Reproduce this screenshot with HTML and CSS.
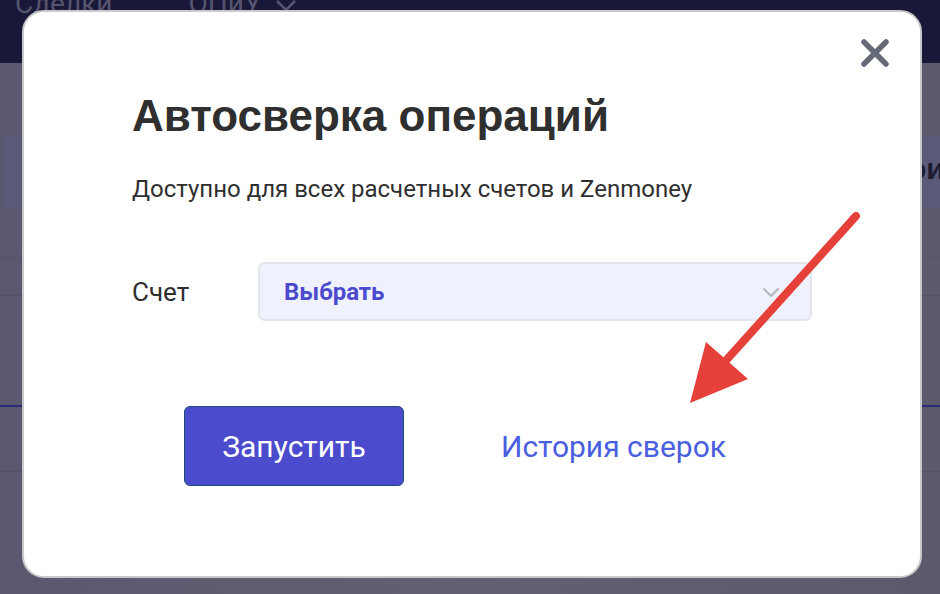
FILE: index.html
```html
<!DOCTYPE html>
<html lang="ru">
<head>
<meta charset="utf-8">
<title>Автосверка операций</title>
<link rel="stylesheet" href="styles.css">
</head>
<body>
<div class="page">
  <header class="topbar">
    <span class="nav-item nav-deals">Сделки</span>
    <span class="nav-item nav-pl">ОПиУ
      <svg class="nav-chevron" width="22" height="14" viewBox="0 0 22 14"><path d="M2 2 L11 11 L20 2" fill="none" stroke="currentColor" stroke-width="2.5"/></svg>
    </span>
  </header>
  <main class="backdrop">
    <div class="bg-card bg-card-left"></div>
    <div class="bg-card bg-card-right"><span class="bg-text">ои</span></div>
    <div class="bg-line l1"></div>
    <div class="bg-line l2"></div>
    <div class="bg-line l3 blue"></div>
    <div class="bg-line l4"></div>
  </main>

  <div class="modal">
    <button class="close" aria-label="Закрыть">
      <svg width="30" height="30" viewBox="0 0 30 30"><path d="M4 4 L26 26 M26 4 L4 26" stroke="#646a77" stroke-width="5.5" stroke-linecap="round"/></svg>
    </button>
    <h1 class="title">Автосверка операций</h1>
    <p class="subtitle">Доступно для всех расчетных счетов и Zenmoney</p>
    <div class="field">
      <span class="label">Счет</span>
      <div class="select">
        <span class="select-value">Выбрать</span>
        <svg class="select-chevron" width="18" height="12" viewBox="0 0 18 12"><path d="M1.5 1.5 L9 9 L16.5 1.5" fill="none" stroke="#b3b6bd" stroke-width="2"/></svg>
      </div>
    </div>
    <div class="actions">
      <button class="run">Запустить</button>
      <a class="history" href="#">История сверок</a>
    </div>
  </div>

  <svg class="annotation" width="940" height="594" viewBox="0 0 940 594">
    <line x1="856" y1="216" x2="712" y2="376" stroke="#e5403a" stroke-width="8" stroke-linecap="round"/>
    <polygon points="690,403 706,342 748,379" fill="#e5403a"/>
  </svg>
</div>
</body>
</html>
```
FILE: styles.css
```css
* { box-sizing: border-box; }
html, body { margin: 0; padding: 0; }
body {
  width: 940px;
  height: 594px;
  overflow: hidden;
  font-family: Roboto, "Noto Sans", sans-serif;
  background: #5d5c6d;
}
.page {
  position: relative;
  width: 940px;
  height: 594px;
  display: flex;
  flex-direction: column;
}
.topbar {
  height: 63px;
  background: #1a1838;
  display: flex;
  align-items: flex-start;
  padding-left: 15px;
  gap: 76px;
  overflow: hidden;
}
.nav-item {
  font-family: Roboto, sans-serif;
  font-size: 28px;
  line-height: 1;
  margin-top: -10px;
  color: #56546e;
  display: flex;
  align-items: center;
  gap: 14px;
}
.nav-chevron { color: #56546e; margin-top: 4px; }
.backdrop {
  position: relative;
  flex: 1;
  background: linear-gradient(90deg, #595870 0%, #626172 50%, #5b5a6c 100%);
}
.bg-card {
  position: absolute;
  top: 73px;
  height: 72px;
  background: #5a5a78;
  border-radius: 6px;
  overflow: hidden;
}
.bg-card-left { left: 4px; width: 40px; }
.bg-card-right { left: 914px; width: 40px; }
.bg-text {
  font-family: "Liberation Sans", sans-serif;
  font-weight: bold;
  font-size: 30px;
  color: #1d1c33;
  position: absolute;
  left: -6px;
  top: 16px;
}
.bg-line { position: absolute; left: 0; right: 0; height: 1px; background: #545366; }
.l1 { top: 194px; }
.l2 { top: 232px; }
.l3 { top: 342px; }
.l3.blue { background: #2c2a78; height: 2px; }
.l4 { top: 408px; }

.modal {
  position: absolute;
  left: 22px;
  top: 10px;
  width: 900px;
  height: 568px;
  background: #fff;
  border: 2px solid #c9c9cb;
  border-radius: 22px;
  padding: 78px 0 0 108px;
  display: flex;
  flex-direction: column;
  color: #2f2f2f;
}
.close {
  position: absolute;
  top: 26px;
  right: 30px;
  width: 30px;
  height: 30px;
  padding: 0;
  border: 0;
  background: none;
  display: flex;
}
.title {
  margin: 0;
  font-family: "Liberation Sans", Arial, sans-serif;
  font-weight: bold;
  font-size: 44px;
  line-height: 52px;
  color: #2f2f2f;
}
.subtitle {
  margin: 33px 0 0;
  font-size: 24px;
  line-height: 28px;
  color: #2f2f2f;
}
.field {
  margin-top: 59px;
  display: flex;
  align-items: center;
}
.label {
  width: 126px;
  font-size: 26px;
  color: #2f2f2f;
}
.select {
  width: 554px;
  height: 59px;
  background: #eff2fd;
  border: 2px solid #e3e5ea;
  border-radius: 7px;
  display: flex;
  align-items: center;
  justify-content: space-between;
  padding: 0 30px 0 24px;
}
.select-value {
  font-size: 24px;
  font-weight: bold;
  color: #4b4acf;
}
.select-chevron { margin-top: 2px; }
.actions {
  margin-top: 85px;
  margin-left: 52px;
  display: flex;
  align-items: center;
  gap: 97px;
}
.run {
  width: 220px;
  height: 80px;
  background: #4b4bcd;
  border: 1.5px solid #1f4b78;
  border-radius: 6px;
  color: #fff;
  font-family: Roboto, sans-serif;
  font-size: 30px;
  padding: 0;
}
.history {
  font-size: 30px;
  color: #4a5ee0;
  text-decoration: none;
}
.annotation {
  position: absolute;
  left: 0;
  top: 0;
  pointer-events: none;
}
```
